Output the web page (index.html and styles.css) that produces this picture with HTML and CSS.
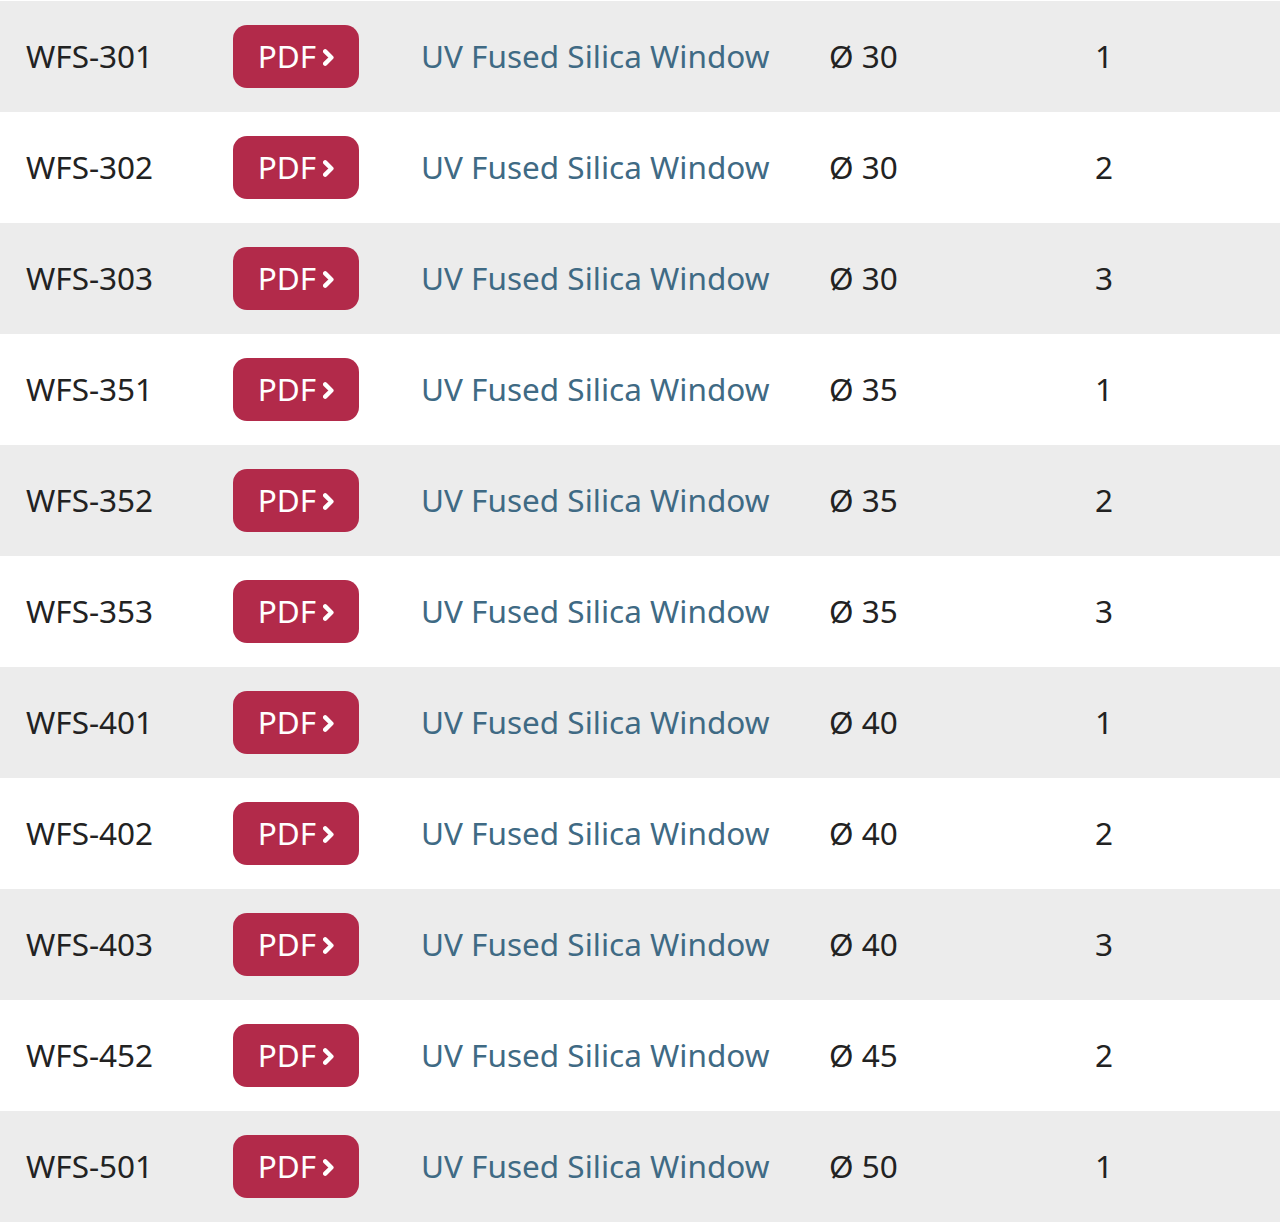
FILE: index.html
```html
<!DOCTYPE html>
<html lang="en">
<head>
<meta charset="utf-8">
<title>Windows</title>
<link rel="stylesheet" href="styles.css">
</head>
<body>
<div class="table">
  <div class="row"><div class="c-part">WFS-301</div><div class="c-pdf"><a class="pdf" href="#"><span class="pdf-label">PDF</span><svg class="chev" viewBox="0 0 11 17"><path d="M2.2 2.4 L8.4 8.5 L2.2 14.6"/></svg></a></div><div class="c-desc">UV Fused Silica Window</div><div class="c-dia">Ø 30</div><div class="c-qty">1</div></div>
  <div class="row"><div class="c-part">WFS-302</div><div class="c-pdf"><a class="pdf" href="#"><span class="pdf-label">PDF</span><svg class="chev" viewBox="0 0 11 17"><path d="M2.2 2.4 L8.4 8.5 L2.2 14.6"/></svg></a></div><div class="c-desc">UV Fused Silica Window</div><div class="c-dia">Ø 30</div><div class="c-qty">2</div></div>
  <div class="row"><div class="c-part">WFS-303</div><div class="c-pdf"><a class="pdf" href="#"><span class="pdf-label">PDF</span><svg class="chev" viewBox="0 0 11 17"><path d="M2.2 2.4 L8.4 8.5 L2.2 14.6"/></svg></a></div><div class="c-desc">UV Fused Silica Window</div><div class="c-dia">Ø 30</div><div class="c-qty">3</div></div>
  <div class="row"><div class="c-part">WFS-351</div><div class="c-pdf"><a class="pdf" href="#"><span class="pdf-label">PDF</span><svg class="chev" viewBox="0 0 11 17"><path d="M2.2 2.4 L8.4 8.5 L2.2 14.6"/></svg></a></div><div class="c-desc">UV Fused Silica Window</div><div class="c-dia">Ø 35</div><div class="c-qty">1</div></div>
  <div class="row"><div class="c-part">WFS-352</div><div class="c-pdf"><a class="pdf" href="#"><span class="pdf-label">PDF</span><svg class="chev" viewBox="0 0 11 17"><path d="M2.2 2.4 L8.4 8.5 L2.2 14.6"/></svg></a></div><div class="c-desc">UV Fused Silica Window</div><div class="c-dia">Ø 35</div><div class="c-qty">2</div></div>
  <div class="row"><div class="c-part">WFS-353</div><div class="c-pdf"><a class="pdf" href="#"><span class="pdf-label">PDF</span><svg class="chev" viewBox="0 0 11 17"><path d="M2.2 2.4 L8.4 8.5 L2.2 14.6"/></svg></a></div><div class="c-desc">UV Fused Silica Window</div><div class="c-dia">Ø 35</div><div class="c-qty">3</div></div>
  <div class="row"><div class="c-part">WFS-401</div><div class="c-pdf"><a class="pdf" href="#"><span class="pdf-label">PDF</span><svg class="chev" viewBox="0 0 11 17"><path d="M2.2 2.4 L8.4 8.5 L2.2 14.6"/></svg></a></div><div class="c-desc">UV Fused Silica Window</div><div class="c-dia">Ø 40</div><div class="c-qty">1</div></div>
  <div class="row"><div class="c-part">WFS-402</div><div class="c-pdf"><a class="pdf" href="#"><span class="pdf-label">PDF</span><svg class="chev" viewBox="0 0 11 17"><path d="M2.2 2.4 L8.4 8.5 L2.2 14.6"/></svg></a></div><div class="c-desc">UV Fused Silica Window</div><div class="c-dia">Ø 40</div><div class="c-qty">2</div></div>
  <div class="row"><div class="c-part">WFS-403</div><div class="c-pdf"><a class="pdf" href="#"><span class="pdf-label">PDF</span><svg class="chev" viewBox="0 0 11 17"><path d="M2.2 2.4 L8.4 8.5 L2.2 14.6"/></svg></a></div><div class="c-desc">UV Fused Silica Window</div><div class="c-dia">Ø 40</div><div class="c-qty">3</div></div>
  <div class="row"><div class="c-part">WFS-452</div><div class="c-pdf"><a class="pdf" href="#"><span class="pdf-label">PDF</span><svg class="chev" viewBox="0 0 11 17"><path d="M2.2 2.4 L8.4 8.5 L2.2 14.6"/></svg></a></div><div class="c-desc">UV Fused Silica Window</div><div class="c-dia">Ø 45</div><div class="c-qty">2</div></div>
  <div class="row"><div class="c-part">WFS-501</div><div class="c-pdf"><a class="pdf" href="#"><span class="pdf-label">PDF</span><svg class="chev" viewBox="0 0 11 17"><path d="M2.2 2.4 L8.4 8.5 L2.2 14.6"/></svg></a></div><div class="c-desc">UV Fused Silica Window</div><div class="c-dia">Ø 50</div><div class="c-qty">1</div></div>
</div>
</body>
</html>
```
FILE: styles.css
```css
html, body {
  margin: 0;
  padding: 0;
  background: #ffffff;
}
body {
  font-family: "Noto Sans", "Open Sans", sans-serif;
  font-size: 31.5px;
  color: #222222;
}
.table {
  padding-top: 1px;
}
.row {
  display: grid;
  grid-template-columns: 233px 188px 408px 266px 1fr;
  align-items: center;
  height: 111px;
}
.row:nth-child(odd) {
  background: #ececec;
}
.c-part,
.c-desc,
.c-dia,
.c-qty {
  padding-bottom: 2px;
}
.c-part {
  padding-left: 26px;
}
.c-desc {
  color: #3f6a84;
}
.pdf {
  display: inline-flex;
  align-items: center;
  justify-content: center;
  gap: 7px;
  width: 126px;
  height: 63px;
  border-radius: 14px;
  background: #b22a4a;
  color: #ffffff;
  text-decoration: none;
  box-sizing: border-box;
  padding-left: 0;
}
.pdf-label {
  padding-bottom: 2px;
}
.chev {
  width: 11px;
  height: 17px;
  margin-top: 1px;
}
.chev path {
  fill: none;
  stroke: #ffffff;
  stroke-width: 4.4;
  stroke-linecap: round;
  stroke-linejoin: round;
}
```
